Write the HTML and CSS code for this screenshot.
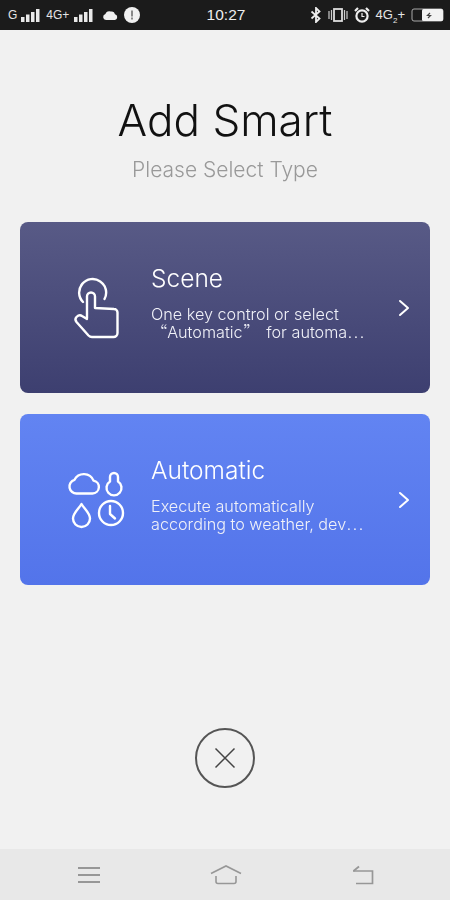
FILE: index.html
```html
<!DOCTYPE html>
<html lang="en">
<head>
<meta charset="utf-8">
<title>Add Smart</title>
<link rel="stylesheet" href="styles.css">
</head>
<body>
<div class="screen">
  <header class="status">
    <div class="status-side">
      <span class="st st-g">G</span>
      <svg class="bars" width="20" height="14" viewBox="0 0 20 14"><path d="M1 9h3.500v5H1zM6 6.500h3.500V14H6zM11 4h3.500v10H11zM16 1h3.500v13H16z" fill="#e8e8e8"/></svg>
      <span class="st st-4g">4G+</span>
      <svg class="bars" width="20" height="14" viewBox="0 0 20 14"><path d="M1 9h3.500v5H1zM6 6.500h3.500V14H6zM11 4h3.500v10H11zM16 1h3.500v13H16z" fill="#e8e8e8"/></svg>
      <svg class="cloud-s" width="17" height="12" viewBox="0 0 17 12"><path d="M4 11a3 3 0 0 1-.6-5.900A4 4 0 0 1 9 2.600a3.400 3.400 0 0 1 4 2.600A3 3 0 0 1 13 11z" fill="#f0f0f0"/></svg>
      <svg class="alert" width="16" height="16" viewBox="0 0 16 16"><circle cx="8" cy="8" r="8" fill="#f0f0f0"/><path d="M7 3.500h2v6H7zM7 10.500h2v2H7z" fill="#888"/></svg>
    </div>
    <div class="clock">10:27</div>
    <div class="status-side status-right">
      <svg width="12" height="16" viewBox="0 0 12 16"><path d="M1.500 4.500l8 7L6 15V1l3.500 3.500-8 7" fill="none" stroke="#eee" stroke-width="1.800"/></svg>
      <svg width="20" height="14" viewBox="0 0 20 14"><rect x="6" y="1" width="8" height="12" fill="none" stroke="#ddd" stroke-width="1.800"/><path d="M1 3v8M3.500 2v10M16.500 2v10M19 3v8" stroke="#ccc" stroke-width="1.200"/></svg>
      <svg width="16" height="16" viewBox="0 0 16 16"><circle cx="8" cy="9" r="5.600" fill="none" stroke="#eee" stroke-width="2.200"/><path d="M8 6v3.500h2.500" fill="none" stroke="#eee" stroke-width="1.200"/><path d="M1 4l3-3M15 4l-3-3" stroke="#eee" stroke-width="2.200"/></svg>
      <span class="st st-net">4G<sub class="st-sub">2</sub>+</span>
      <svg width="33" height="14" viewBox="0 0 33 14"><rect x="1" y="1" width="31" height="12" rx="2" fill="none" stroke="#aaa" stroke-width="1"/><rect x="11" y="1" width="21" height="12" rx="1.500" fill="#f2f2f2"/><path d="M19 5l-2.500 2.500h3L17 10" fill="none" stroke="#444" stroke-width="1.200"/></svg>
    </div>
  </header>

  <main class="content">
    <h1 class="title">Add Smart</h1>
    <p class="subtitle">Please Select Type</p>

    <section class="card card-scene">
      <div class="card-icon">
        <svg width="50" height="62" viewBox="70 277 50 62" fill="none" stroke="#fff" stroke-width="2.400" stroke-linecap="round" stroke-linejoin="round">
          <path d="M83 302A13.500 13.500 0 1 1 104.500 299"/>
          <path d="M87 318V296.500a4 4 0 0 1 8 0V308l19 1a3.500 3.500 0 0 1 3.500 3.500V333a4 4 0 0 1-4 4H92c-1.500 0-2.500-.5-3.500-1.500L76.500 322c-1.500-2-1.500-3.500 0-5s3.500-2.500 5.500-1l5 3"/>
        </svg>
      </div>
      <div class="card-text">
        <h2 class="card-title">Scene</h2>
        <p class="card-desc">One key control or select<br><span class="cjk">“</span>Automatic<span class="cjk q-close">”</span> for automa<span class="cjk">⋯</span></p>
      </div>
      <svg class="chev" width="12" height="18" viewBox="0 0 12 18" fill="none" stroke="#fff" stroke-width="2" stroke-linecap="round" stroke-linejoin="round"><path d="M2 2l8 7-8 7"/></svg>
    </section>

    <section class="card card-auto">
      <div class="card-icon">
        <svg width="60" height="58" viewBox="67 470 60 58" fill="none" stroke="#fff" stroke-width="2.400" stroke-linecap="round" stroke-linejoin="round">
          <path d="M77 492.500H92.500a6.500 6.500 0 0 0 1-12.900A10.500 10.500 0 0 0 74.500 478.800A7 7 0 0 0 77 492.500z"/>
          <path d="M110 480.500V476a4 4 0 0 1 8 0v4.500a7.500 7.500 0 1 1-8 0z"/>
          <path d="M81.500 503c3 5 8.500 9 8.500 14.500a8.500 8.500 0 0 1-17 0c0-5.500 5.500-9.500 8.500-14.500z"/>
          <circle cx="111" cy="512" r="12"/>
          <path d="M110 505v8l5 4.500"/>
        </svg>
      </div>
      <div class="card-text">
        <h2 class="card-title">Automatic</h2>
        <p class="card-desc">Execute automatically<br>according to weather, dev<span class="cjk">⋯</span></p>
      </div>
      <svg class="chev" width="12" height="18" viewBox="0 0 12 18" fill="none" stroke="#fff" stroke-width="2" stroke-linecap="round" stroke-linejoin="round"><path d="M2 2l8 7-8 7"/></svg>
    </section>

    <div class="close-wrap">
      <button class="close" type="button" aria-label="Close">
        <svg width="22" height="22" viewBox="0 0 22 22" fill="none" stroke="#444" stroke-width="1.500"><path d="M1.500 1.500l19 19M20.500 1.500l-19 19"/></svg>
      </button>
    </div>
  </main>

  <nav class="navbar">
    <svg width="22" height="18" viewBox="0 0 22 18" fill="none" stroke="#979797" stroke-width="2"><path d="M0 2h22M0 9h22M0 16h22"/></svg>
    <svg width="32" height="20" viewBox="0 0 32 20" fill="none" stroke="#979797" stroke-width="1.600"><path d="M1 8.500L16 1l15 7.500"/><path d="M6 11v5.500a2 2 0 0 0 2 2h16a2 2 0 0 0 2-2V11"/></svg>
    <svg width="22" height="20" viewBox="0 0 22 20" fill="none" stroke="#979797" stroke-width="1.700"><path d="M1 6h19.500v12.500H4"/><path d="M7 1.500L1.500 6"/></svg>
  </nav>
</div>
</body>
</html>
```

FILE: styles.css
```css
* { box-sizing: border-box; }
html, body { margin: 0; padding: 0; }
body { font-family: Inter, "Liberation Sans", sans-serif; background: #f1f1f1; }
.screen { width: 450px; height: 900px; display: flex; flex-direction: column; overflow: hidden; filter: blur(0.4px); }

.status { height: 30px; flex: none; background: #1b1b1b; color: #eee; display: grid; grid-template-columns: 1fr auto 1fr; align-items: center; padding: 0 6px 0 8px; }
.status-side { display: flex; align-items: center; }
.status-right { justify-content: flex-end; gap: 6px; }
.st { font-family: "Liberation Sans", sans-serif; font-size: 12px; line-height: 14px; color: #e6e6e6; }
.st-g { margin-right: 3px; }
.st-4g { margin: 0 4px 0 6px; }
.st-net { font-size: 13px; white-space: nowrap; }
.st-sub { font-size: 8px; line-height: 0; }
.cloud-s { margin: 0 5px 0 9px; }
.clock { font-family: "Liberation Sans", sans-serif; font-size: 15.500px; color: #eee; }

.content { flex: 1; display: flex; flex-direction: column; padding: 0 20px; }
.title { margin: 68px 0 0; font-weight: 300; font-size: 44px; line-height: 44px; text-align: center; color: #111; }
.subtitle { margin: 15px 0 0; font-weight: 300; font-size: 21px; line-height: 26px; text-align: center; color: #999; }

.card { height: 171px; border-radius: 8px; display: flex; align-items: center; color: #fff; }
.card-scene { margin-top: 39px; background: linear-gradient(#585a86, #3d3f70); }
.card-auto { margin-top: 21px; background: linear-gradient(#6284f2, #5374ea); }
.card-icon { width: 131px; flex: none; display: flex; padding-left: 50px; }
.card-auto .card-icon { padding-left: 47px; }
.card-text { flex: 1; min-width: 0; padding-bottom: 11px; }
.card-title { margin: 0; font-weight: 300; font-size: 24.500px; line-height: 30px; }
.card-desc { margin: 12px 0 0; font-weight: 300; font-size: 16.200px; line-height: 18.500px; color: #f0f1f8; white-space: nowrap; }
.cjk { font-family: "Noto Sans CJK SC", sans-serif; line-height: 1; }
.q-close { margin: 0 2px 0 1px; }
.chev { margin-right: 20px; flex: none; }

.close-wrap { display: flex; justify-content: center; margin-top: 143px; }
.close { width: 60px; height: 60px; border-radius: 50%; border: 2px solid #555; background: transparent; display: flex; align-items: center; justify-content: center; padding: 0; }

.navbar { height: 51px; flex: none; background: #e8e8e8; display: flex; align-items: center; justify-content: space-between; padding: 0 76px 0 78px; }
```
